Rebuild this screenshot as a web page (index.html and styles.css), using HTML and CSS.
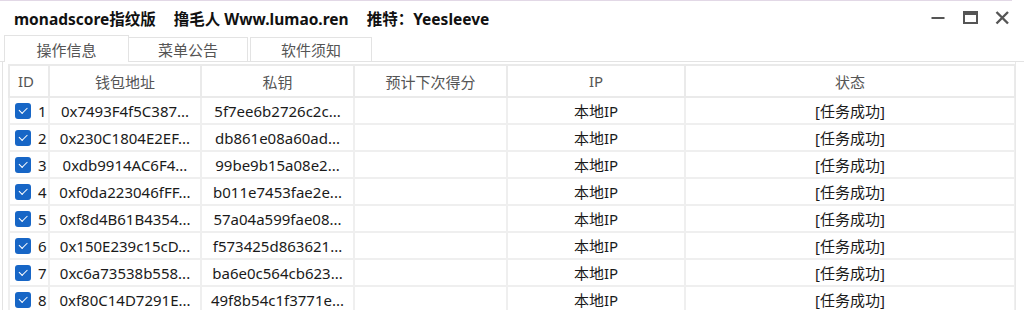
FILE: index.html
```html
<!DOCTYPE html>
<html lang="zh">
<head>
<meta charset="utf-8">
<title>monadscore指纹版</title>
<link rel="stylesheet" href="styles.css">
</head>
<body>
<div class="window">
  <div class="titlebar">
    <div class="title">monadscore指纹版<span class="sp"></span>撸毛人 Www.lumao.ren<span class="sp"></span>推特：Yeesleeve</div>
    <div class="controls">
      <svg class="ctl" width="16" height="16" viewBox="0 0 16 16"><rect x="1.5" y="7" width="13" height="2" fill="#555"/></svg>
      <svg class="ctl" width="16" height="16" viewBox="0 0 16 16"><rect x="2" y="2" width="13" height="11" fill="none" stroke="#555" stroke-width="2"/><rect x="2" y="2" width="13" height="3" fill="#555"/></svg>
      <svg class="ctl" width="16" height="16" viewBox="0 0 16 16"><path d="M2.5 2 L14 13.5 M14 2 L2.5 13.5" stroke="#555" stroke-width="2.4" fill="none"/></svg>
    </div>
  </div>
  <div class="tabs">
    <div class="tab active">操作信息</div>
    <div class="tab t2">菜单公告</div>
    <div class="tab t3">软件须知</div>
  </div>
  <div class="panel">
    <table class="grid">
      <colgroup>
        <col class="c-id"><col class="c-addr"><col class="c-key"><col class="c-score"><col class="c-ip"><col class="c-state">
      </colgroup>
      <thead>
        <tr><th class="th-id">ID</th><th>钱包地址</th><th>私钥</th><th>预计下次得分</th><th>IP</th><th>状态</th></tr>
      </thead>
      <tbody>
        <tr><td class="idc"><span class="cb"></span>1</td><td>0x7493F4f5C387...</td><td>5f7ee6b2726c2c...</td><td></td><td>本地IP</td><td>[任务成功]</td></tr>
        <tr><td class="idc"><span class="cb"></span>2</td><td>0x230C1804E2EF...</td><td>db861e08a60ad...</td><td></td><td>本地IP</td><td>[任务成功]</td></tr>
        <tr><td class="idc"><span class="cb"></span>3</td><td>0xdb9914AC6F4...</td><td>99be9b15a08e2...</td><td></td><td>本地IP</td><td>[任务成功]</td></tr>
        <tr><td class="idc"><span class="cb"></span>4</td><td>0xf0da223046fFF...</td><td>b011e7453fae2e...</td><td></td><td>本地IP</td><td>[任务成功]</td></tr>
        <tr><td class="idc"><span class="cb"></span>5</td><td>0xf8d4B61B4354...</td><td>57a04a599fae08...</td><td></td><td>本地IP</td><td>[任务成功]</td></tr>
        <tr><td class="idc"><span class="cb"></span>6</td><td>0x150E239c15cD...</td><td>f573425d863621...</td><td></td><td>本地IP</td><td>[任务成功]</td></tr>
        <tr><td class="idc"><span class="cb"></span>7</td><td>0xc6a73538b558...</td><td>ba6e0c564cb623...</td><td></td><td>本地IP</td><td>[任务成功]</td></tr>
        <tr><td class="idc"><span class="cb"></span>8</td><td>0xf80C14D7291E...</td><td>49f8b54c1f3771e...</td><td></td><td>本地IP</td><td>[任务成功]</td></tr>
      </tbody>
    </table>
  </div>
</div>
</body>
</html>
```
FILE: styles.css
```css
* { box-sizing: border-box; }
html, body { margin: 0; padding: 0; background: #fff; }
body {
  font-family: "Noto Sans", "Noto Sans CJK SC", sans-serif;
  color: #222;
  width: 1024px;
  height: 310px;
  overflow: hidden;
}
.window {
  border-top: 1px solid #e2d8e6;
  width: 1012px;
}
.titlebar {
  height: 34px;
  display: flex;
  align-items: center;
  justify-content: space-between;
  padding-left: 14px;
  width: 1024px;
}
.title {
  font-weight: bold;
  font-size: 15.5px;
  color: #111;
  white-space: nowrap;
  margin-top: 1px;
}
.sp { display: inline-block; width: 18px; }
.controls {
  display: flex;
  gap: 16px;
  padding-right: 14px;
  align-items: center;
}
.ctl { display: block; }
.tabs {
  display: flex;
  align-items: flex-end;
  height: 27px;
  padding-left: 4px;
  border-bottom: 1px solid #e3e3e3;
  width: 1024px;
}
.tab {
  height: 24px;
  border: 1px solid #e3e3e3;
  border-bottom: none;
  display: flex;
  align-items: center;
  justify-content: center;
  font-size: 15px;
  color: #555;
  background: #fff;
}
.tab.active {
  width: 125px;
  height: 27px;
  margin-bottom: -1px;
  position: relative;
}
.tab.t2 { width: 119px; border-left: none; }
.tab.t3 { width: 122px; margin-left: 2px; }
.panel {
  border-left: 1px solid #e3e3e3;
  margin-left: 2px;
  padding: 2px 0 0 5px;
  height: 260px;
  width: 1014px;
  overflow: hidden;
  border-right: 1px solid #e9e9e9;
}
.grid {
  border-collapse: collapse;
  table-layout: fixed;
  width: 1006px;
  font-size: 15px;
}
.c-id { width: 40px; }
.c-addr { width: 152px; }
.c-key { width: 153px; }
.c-score { width: 153px; }
.c-ip { width: 178px; }
.c-state { width: 330px; }
.grid th, .grid td {
  border: 2px solid #efefef;
  text-align: center;
  white-space: nowrap;
  overflow: hidden;
  padding: 0;
}
.grid th {
  height: 32px;
  font-weight: normal;
  color: #555;
  border-color: #eaeaea;
}
.grid td {
  height: 27px;
  color: #1a1a1a;
}
.grid .th-id { text-align: left; padding-left: 8px; }
.idc {
  text-align: left !important;
  padding-left: 5px !important;
}
.cb {
  display: inline-block;
  width: 16px;
  height: 16px;
  border-radius: 3px;
  background: #1766c6;
  vertical-align: -2px;
  margin-right: 7px;
  position: relative;
}
.cb::after {
  content: "";
  position: absolute;
  left: 4px;
  top: 4px;
  width: 7px;
  height: 3.5px;
  border-left: 1.3px solid #fff;
  border-bottom: 1.3px solid #fff;
  transform: rotate(-45deg);
}
```
